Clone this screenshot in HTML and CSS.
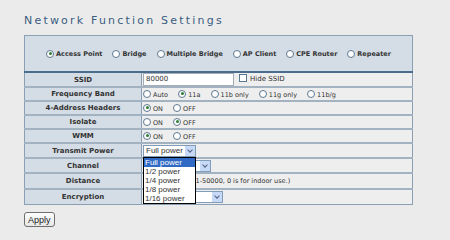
FILE: index.html
```html
<!DOCTYPE html>
<html lang="en">
<head>
    <meta charset="UTF-8">
    <title>Network Function Settings</title>
    <link rel="stylesheet" href="styles.css">
</head>
<body>
    <h1 class="title">Network Function Settings</h1>
    <table class="settings">
        <tr class="modes">
            <td colspan="2">
                <div class="mode-list">
                    <label><span class="radio on"></span>Access Point</label>
                    <label><span class="radio"></span>Bridge</label>
                    <label><span class="radio"></span>Multiple Bridge</label>
                    <label><span class="radio"></span>AP Client</label>
                    <label><span class="radio"></span>CPE Router</label>
                    <label><span class="radio"></span>Repeater</label>
                </div>
            </td>
        </tr>
        <tr>
            <th>SSID</th>
            <td>
                <span class="textbox ssid">80000</span>
                <span class="checkbox"></span><span class="hide-ssid">Hide SSID</span>
            </td>
        </tr>
        <tr>
            <th>Frequency Band</th>
            <td>
                <label class="opt"><span class="radio"></span>Auto</label>
                <label class="opt"><span class="radio on"></span>11a</label>
                <label class="opt"><span class="radio"></span>11b only</label>
                <label class="opt"><span class="radio"></span>11g only</label>
                <label class="opt"><span class="radio"></span>11b/g</label>
            </td>
        </tr>
        <tr>
            <th>4-Address Headers</th>
            <td>
                <label class="opt"><span class="radio on"></span>ON</label>
                <label class="opt"><span class="radio"></span>OFF</label>
            </td>
        </tr>
        <tr>
            <th>Isolate</th>
            <td>
                <label class="opt"><span class="radio"></span>ON</label>
                <label class="opt"><span class="radio on"></span>OFF</label>
            </td>
        </tr>
        <tr>
            <th>WMM</th>
            <td>
                <label class="opt"><span class="radio on"></span>ON</label>
                <label class="opt"><span class="radio"></span>OFF</label>
            </td>
        </tr>
        <tr class="tall">
            <th>Transmit Power</th>
            <td>
                <div class="select power">
                    <span class="select-value">Full power</span>
                    <span class="select-arrow"></span>
                    <ul class="dropdown">
                        <li class="active">Full power</li>
                        <li>1/2 power</li>
                        <li>1/4 power</li>
                        <li>1/8 power</li>
                        <li>1/16 power</li>
                    </ul>
                </div>
            </td>
        </tr>
        <tr class="tall">
            <th>Channel</th>
            <td>
                <div class="select channel">
                    <span class="select-value"></span>
                    <span class="select-arrow"></span>
                </div>
            </td>
        </tr>
        <tr class="taller">
            <th>Distance</th>
            <td>
                <span class="textbox distance"></span>
                <span class="hint">(1-50000, 0 is for indoor use.)</span>
            </td>
        </tr>
        <tr class="tall">
            <th>Encryption</th>
            <td>
                <div class="select encryption">
                    <span class="select-value"></span>
                    <span class="select-arrow"></span>
                </div>
            </td>
        </tr>
    </table>
    <button class="apply">Apply</button>
</body>
</html>
```

FILE: styles.css
```css
body {
    margin: 0;
    padding: 0 0 0 24px;
    background: #ebebeb;
    font-family: 'DejaVu Sans', Verdana, sans-serif;
    font-size: 7px;
    color: #333;
}
.title {
    margin: 0;
    padding-top: 14px;
    height: 21px;
    font-size: 11px;
    font-weight: normal;
    letter-spacing: 2.2px;
    color: #3a5d80;
}
.settings {
    border-collapse: collapse;
    width: 389px;
    border: 1px solid #8a9fb4;
}
.modes td {
    height: 35px;
    background: #d4dde6;
    border-bottom: 2px solid #4b6c8c;
    padding: 0;
}
.mode-list {
    display: flex;
    justify-content: center;
    gap: 10px;
    font-weight: bold;
    color: #333;
}
.mode-list label {
    display: flex;
    align-items: center;
}
th {
    width: 116px;
    height: 12px;
    padding: 0;
    background: #d4dde6;
    font-weight: bold;
    color: #333;
    text-align: center;
    border-right: 1px solid #8a9fb4;
    border-bottom: 2px solid #a3b2c1;
}
td {
    height: 12px;
    padding: 0 0 0 1px;
    background: #eeeeee;
    border-bottom: 2px solid #a3b2c1;
    white-space: nowrap;
    font-size: 6.5px;
}
.tall th, .tall td {
    height: 13px;
}
.taller th, .taller td {
    height: 14px;
}
tr:last-child th, tr:last-child td {
    height: 14px;
    border-bottom: none;
}
.radio {
    display: inline-block;
    width: 6px;
    height: 6px;
    border: 1px solid #5d7891;
    border-radius: 50%;
    background: #fff;
    margin-right: 2px;
    vertical-align: -1px;
    position: relative;
}
.radio.on::after {
    content: "";
    position: absolute;
    left: 1.5px;
    top: 1.5px;
    width: 3px;
    height: 3px;
    border-radius: 50%;
    background: #2e7d32;
}
.opt {
    margin-right: 8px;
}
.checkbox {
    display: inline-block;
    width: 6px;
    height: 6px;
    border: 1px solid #5d7891;
    background: #fff;
    margin: 0 3px 0 3px;
    vertical-align: -1px;
}
.hide-ssid {
    font-size: 7px;
}
.textbox {
    display: inline-block;
    box-sizing: border-box;
    height: 13px;
    line-height: 11px;
    padding: 0 2px;
    background: #fff;
    border: 1px solid #a5acb5;
    vertical-align: middle;
    font-size: 7px;
}
.ssid {
    width: 91px;
}
.distance {
    width: 47px;
}
.hint {
    margin-left: 1px;
    font-size: 6.5px;
}
.select {
    position: relative;
    display: inline-flex;
    box-sizing: border-box;
    height: 12px;
    background: #fff;
    border: 1px solid #7f9db9;
    font-family: 'Liberation Sans', Arial, sans-serif;
    font-size: 8px;
    vertical-align: middle;
}
.select-value {
    flex: 1;
    line-height: 10px;
    padding-left: 2px;
}
.select-arrow {
    width: 10px;
    background: #c8d8f7;
    border-left: 1px solid #fff;
    position: relative;
}
.select-arrow::after {
    content: "";
    position: absolute;
    left: 3px;
    top: 2px;
    width: 3px;
    height: 3px;
    border-right: 1.5px solid #4d6185;
    border-bottom: 1.5px solid #4d6185;
    transform: rotate(45deg);
}
.power {
    width: 53px;
}
.channel {
    width: 68px;
}
.encryption {
    width: 80px;
}
.dropdown {
    position: absolute;
    left: -1px;
    top: 11px;
    width: 53px;
    box-sizing: border-box;
    margin: 0;
    padding: 0;
    list-style: none;
    background: #fff;
    border: 1px solid #000;
    z-index: 2;
}
.dropdown li {
    height: 9.2px;
    line-height: 9px;
    padding-left: 1px;
}
.dropdown li.active {
    background: #316ac5;
    color: #fff;
}
.apply {
    display: block;
    margin-top: 7px;
    height: 15px;
    padding: 0 3px;
    font-family: 'Liberation Sans', Arial, sans-serif;
    font-size: 9px;
    color: #222;
    background: linear-gradient(#fdfdfd, #e6e6e6);
    border: 1px solid #6f6f6f;
    border-radius: 3px;
}
```
